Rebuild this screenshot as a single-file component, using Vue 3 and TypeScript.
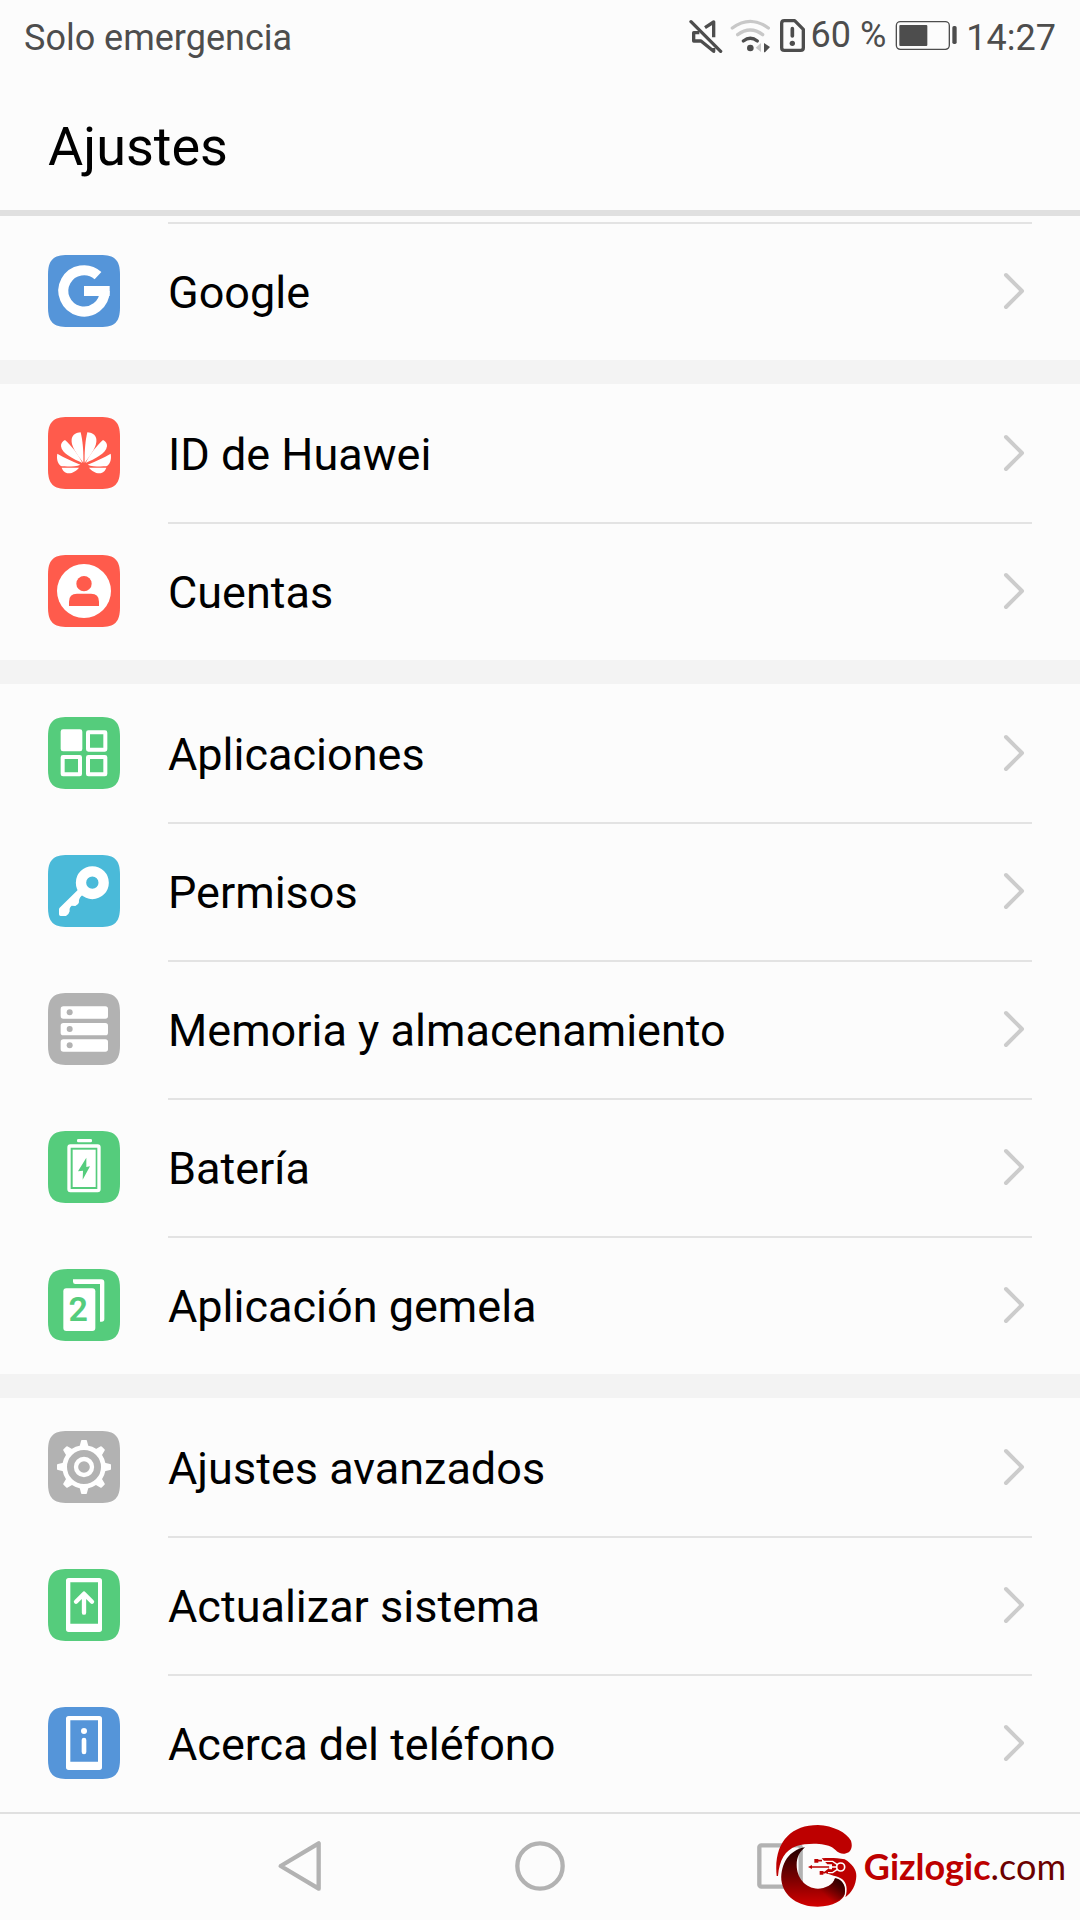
<script setup lang="ts">
type IconName =
  | 'google' | 'huawei' | 'account' | 'apps' | 'key' | 'storage'
  | 'battery' | 'twin' | 'gear' | 'update' | 'info'

interface SettingItem {
  label: string
  icon: IconName
  color: string
}

const blue = '#5595d9'
const red = '#ff5b4c'
const green = '#55cc7c'
const cyan = '#4abad9'
const grey = '#b2b2b2'

const groups: SettingItem[][] = [
  [{ label: 'Google', icon: 'google', color: blue }],
  [
    { label: 'ID de Huawei', icon: 'huawei', color: red },
    { label: 'Cuentas', icon: 'account', color: red },
  ],
  [
    { label: 'Aplicaciones', icon: 'apps', color: green },
    { label: 'Permisos', icon: 'key', color: cyan },
    { label: 'Memoria y almacenamiento', icon: 'storage', color: grey },
    { label: 'Batería', icon: 'battery', color: green },
    { label: 'Aplicación gemela', icon: 'twin', color: green },
  ],
  [
    { label: 'Ajustes avanzados', icon: 'gear', color: grey },
    { label: 'Actualizar sistema', icon: 'update', color: green },
    { label: 'Acerca del teléfono', icon: 'info', color: blue },
  ],
]

const teeth = [0, 45, 90, 135, 180, 225, 270, 315]
</script>

<template>
  <div class="screen">
    <div class="status">
      <span class="carrier">Solo emergencia</span>
      <div class="indicators">
        <svg class="mute" viewBox="57 54 102 108" width="34" height="36" fill="none" stroke="#4d4d4d" stroke-width="10">
          <path d="M88 98H71V123H93L131 154V144" stroke-linejoin="round" />
          <path d="M105 83L131 66V112" stroke-linejoin="round" />
          <path d="M63 65L152 154" stroke-linecap="round" />
        </svg>
        <svg class="wifi" viewBox="180 54 123 108" width="41" height="36" fill="none" stroke-width="10" stroke-linecap="round">
          <path d="M187 84Q241 44 295 84" stroke="#c8c8c8" />
          <path d="M203 104Q241 76 278 104" stroke="#c8c8c8" />
          <path d="M220 123Q241 106 262 123" stroke="#4d4d4d" />
          <circle cx="241" cy="144" r="10" fill="#4d4d4d" />
          <path d="M273 129V156L257 143Z" fill="#c8c8c8" />
          <path d="M282 129L300 141L285 157H282Z" fill="#4d4d4d" />
        </svg>
        <svg class="sim" viewBox="327 54 81 108" width="27" height="36" fill="none" stroke="#4d4d4d" stroke-width="10">
          <path d="M335 70Q335 62 343 62H374L400 88V143Q400 151 392 151H343Q335 151 335 143Z" stroke-linejoin="round" />
          <path d="M367 86V108" stroke-width="11" stroke-linecap="round" />
          <circle cx="367" cy="130" r="8" fill="#4d4d4d" stroke="none" />
        </svg>
        <span class="percent">60 %</span>
        <svg class="power" viewBox="675 54 189 108" width="63" height="36">
          <rect x="679" y="65" width="159" height="83" rx="12" fill="none" stroke="#4d4d4d" stroke-width="4" />
          <rect x="688" y="75" width="84" height="63" rx="3" fill="#4d4d4d" />
          <rect x="847" y="78" width="13" height="54" rx="5" fill="#4d4d4d" />
        </svg>
        <span class="clock">14:27</span>
      </div>
    </div>

    <header class="header">
      <h1>Ajustes</h1>
    </header>

    <main class="list">
      <section v-for="(group, g) in groups" :key="g" class="group">
        <a v-for="item in group" :key="item.label" href="#" class="row">
          <svg class="icon" viewBox="0 0 216 216" width="72" height="72" fill="#fff">
            <path
              d="M0 60C0 15 15 0 60 0H156C201 0 216 15 216 60V156C216 201 201 216 156 216H60C15 216 0 201 0 156Z"
              :fill="item.color"
            />
            <template v-if="item.icon === 'google'">
              <path d="M150 62A62 62 0 1 0 170 108" fill="none" stroke="#fff" stroke-width="30" />
              <rect x="108" y="93" width="77" height="30" />
            </template>
            <template v-else-if="item.icon === 'huawei'">
              <g v-for="side in [1, -1]" :key="side" :transform="side === 1 ? '' : 'translate(216 0) scale(-1 1)'">
                <path d="M106 137C86 112 68 87 71 66C74 52 85 47 98 46C104 70 107 105 106 137Z" />
                <path d="M103 138C76 126 42 110 39 88C38 79 44 72 51 69C68 84 91 112 103 138Z" />
                <path d="M97 143C74 133 48 122 28 110C24 128 32 145 41 148C60 149 84 149 97 143Z" />
                <path d="M41 152H93C87 160 74 169 62 169C50 168 44 160 41 152Z" />
              </g>
            </template>
            <template v-else-if="item.icon === 'account'">
              <circle cx="108" cy="108" r="81" />
              <circle cx="108" cy="86" r="23" :fill="item.color" />
              <path d="M63 153V140Q63 116 87 116H129Q153 116 153 140V153Z" :fill="item.color" />
            </template>
            <template v-else-if="item.icon === 'apps'">
              <rect x="38" y="37" width="65" height="66" rx="7" />
              <g fill="none" stroke="#fff" stroke-width="12">
                <rect x="120" y="46" width="52" height="52" rx="1" />
                <rect x="44" y="120" width="52" height="52" rx="1" />
                <rect x="120" y="120" width="52" height="52" rx="1" />
              </g>
            </template>
            <template v-else-if="item.icon === 'key'">
              <circle cx="133" cy="83" r="34" fill="none" stroke="#fff" stroke-width="31" />
              <path d="M90 104L35 158Q33 160 33 163V178Q33 183 38 183H54Q64 176 65 169C64 162 65 157 71 152L82 153Q92 149 93 142C92 136 94 129 100 123L108 116Z" />
            </template>
            <template v-else-if="item.icon === 'storage'">
              <g v-for="y in [40, 90, 139]" :key="y">
                <rect x="38" :y="y" width="142" height="37" rx="8" />
                <circle cx="65" :cy="y + 18" r="9" :fill="item.color" />
              </g>
            </template>
            <template v-else-if="item.icon === 'battery'">
              <rect x="87" y="24" width="45" height="10" rx="4" />
              <rect x="63" y="45" width="90" height="134" rx="4" fill="none" stroke="#fff" stroke-width="10" />
              <rect x="74" y="56" width="69" height="112" />
              <path d="M115 80L90 121L105 119L104 146L126 106L115 108Z" :fill="item.color" />
            </template>
            <template v-else-if="item.icon === 'twin'">
              <rect x="46" y="58" width="96" height="128" rx="9" />
              <path d="M75 31H160Q169 31 169 40V150Q169 158 161 158H156V45H82Q75 45 75 38Z" />
              <text x="91" y="156" text-anchor="middle" class="digit" :fill="item.color">2</text>
            </template>
            <template v-else-if="item.icon === 'gear'">
              <circle cx="108" cy="108" r="58" fill="none" stroke="#fff" stroke-width="14" />
              <circle cx="108" cy="108" r="24" fill="none" stroke="#fff" stroke-width="13" />
              <path
                v-for="angle in teeth"
                :key="angle"
                d="M99 30Q99 27 102 27H114Q117 27 117 30L121 46L129 50H87L95 46Z"
                :transform="`rotate(${angle} 108 108)`"
              />
            </template>
            <template v-else>
              <path d="M62 27H154Q162 27 162 35V181Q162 189 154 189H62Q54 189 54 181V35Q54 27 62 27ZM67 40V164H150V40Z" fill-rule="evenodd" />
              <path
                v-if="item.icon === 'update'"
                d="M108 76V131M84 98L108 74L132 98"
                fill="none" stroke="#fff" stroke-width="13" stroke-linecap="round" stroke-linejoin="round"
              />
              <g v-else>
                <circle cx="108" cy="72" r="9" />
                <rect x="101" y="92" width="14" height="50" rx="7" />
              </g>
            </template>
          </svg>
          <span class="label">{{ item.label }}</span>
          <svg class="chevron" viewBox="0 0 24 42" width="24" height="42">
            <path d="M4 5L20 21L4 37" fill="none" stroke="#ccc" stroke-width="4" stroke-linecap="round" stroke-linejoin="round" />
          </svg>
        </a>
      </section>
    </main>

    <nav class="nav">
      <button type="button" class="back" aria-label="Atrás">
        <svg viewBox="0 0 150 156" width="50" height="52" fill="none" stroke="#b2b2b2" stroke-width="13" stroke-linejoin="round">
          <path d="M17 78L131 10V146Z" />
        </svg>
      </button>
      <button type="button" class="home" aria-label="Inicio">
        <svg viewBox="0 0 156 156" width="52" height="52" fill="none" stroke="#b2b2b2" stroke-width="13">
          <circle cx="78" cy="78" r="68" />
        </svg>
      </button>
      <button type="button" class="recent" aria-label="Recientes">
        <svg viewBox="0 0 156 156" width="52" height="52" fill="none" stroke="#b2b2b2" stroke-width="13">
          <rect x="16" y="16" width="124" height="124" rx="6" />
        </svg>
      </button>
      <div class="brand">
        <svg viewBox="75 72 246 252" width="82" height="84">
          <defs>
            <linearGradient id="swirl" x1="0.500" y1="0" x2="0.500" y2="1">
              <stop offset="0.050" stop-color="#2a0000" />
              <stop offset="0.500" stop-color="#750000" />
              <stop offset="1" stop-color="#d40000" />
            </linearGradient>
            <linearGradient id="shade" x1="1" y1="0" x2="0" y2="1">
              <stop offset="0.100" stop-color="#2a0000" />
              <stop offset="0.700" stop-color="#2a0000" stop-opacity="0" />
            </linearGradient>
          </defs>
          <path d="M80 228C70 130 120 75 204 75C250 77 290 98 303 122C310 145 300 160 284 161C265 163 258 150 246 142C225 128 170 128 140 138C105 150 88 180 84 228Z" fill="#bd0000" />
          <path d="M165 142C118 150 92 190 94 240C100 290 145 320 203 320C250 320 280 300 284 283C290 258 274 236 255 235C250 255 225 266 204 266C165 265 140 232 140 195C140 170 150 155 165 142Z" fill="url(#swirl)" />
          <path d="M284 283C290 258 274 236 255 235C250 255 225 266 204 266L240 312Q276 300 284 283Z" fill="url(#shade)" />
          <path d="M215 175C240 173 262 174 284 178C305 190 320 210 319 228C318 255 306 277 286 292C294 268 290 248 276 237C262 228 240 225 226 219L238 208H246V193H232Z" fill="#bd0000" />
          <path d="M186 201H238M200 182H216M214 218H224L238 207" fill="none" stroke="#bd0000" stroke-width="5" />
          <path d="M174 201L186 195V207ZM193 177H205V188H193ZM209 213H220V224H209Z" fill="#bd0000" />
          <path d="M238 201H260M222 184H248L262 194M234 218H248L262 208" fill="none" stroke="#fff" stroke-width="4" />
          <circle cx="272" cy="201" r="12" fill="#bd0000" stroke="#fff" stroke-width="5" />
        </svg>
        <span class="wordmark"><b>Gizlogic</b><span class="tld">.com</span></span>
      </div>
    </nav>
  </div>
</template>

<style>
body {
  background: #fcfcfc;
}
</style>

<style scoped>
.screen {
  min-height: 100vh;
  display: flex;
  flex-direction: column;
  background: #fcfcfc;
  color: #000;
  font-family: Roboto, "Liberation Sans", sans-serif;
}

svg {
  display: block;
  flex: none;
}

.status {
  display: flex;
  align-items: center;
  justify-content: space-between;
  height: 72px;
  padding: 0 24px;
  color: #4d4d4d;
  font-size: 36px;
  line-height: 44px;
}

.carrier,
.clock {
  padding-top: 4px;
}

.indicators {
  display: flex;
  align-items: center;
}

.wifi {
  margin-left: 7px;
}

.sim {
  margin: 0 5px 0 8px;
}

.percent {
  padding-bottom: 2px;
}

.power {
  margin: 0 8px 0 9px;
}

.header {
  display: flex;
  align-items: center;
  height: 138px;
  padding: 0 48px;
  border-bottom: 6px solid #e0e0e0;
}

h1 {
  margin: 0;
  padding-top: 12px;
  font-size: 54px;
  line-height: 64px;
  font-weight: 400;
}

.list {
  flex: 1;
  padding-top: 6px;
}

.group + .group {
  border-top: 24px solid #f3f3f3;
}

.row {
  position: relative;
  display: flex;
  align-items: center;
  height: 138px;
  padding: 0 48px;
  color: inherit;
  text-decoration: none;
}

.row + .row::before,
.group:first-child .row::before {
  content: "";
  position: absolute;
  top: 0;
  left: 168px;
  right: 48px;
  height: 2px;
  background: #e3e3e3;
}

.label {
  flex: 1;
  margin-left: 48px;
  padding-top: 4px;
  font-size: 45px;
  line-height: 54px;
}

.chevron {
  margin-right: 6px;
}

.digit {
  font-size: 102px;
  font-weight: 600;
}

.nav {
  position: relative;
  display: grid;
  grid-template-columns: 3fr 4fr 4fr 4fr 3fr;
  height: 108px;
  box-shadow: inset 0 2px #e0e0e0;
}

.nav button {
  display: flex;
  align-items: center;
  justify-content: center;
  padding: 0;
  border: 0;
  background: none;
}

.back {
  grid-column: 2;
}

.brand {
  position: absolute;
  top: 12px;
  right: 14px;
  display: flex;
  align-items: center;
  gap: 7px;
}

.wordmark {
  color: #bd0000;
  font-family: Lato, sans-serif;
  font-size: 36px;
  line-height: 44px;
  white-space: nowrap;
}

.tld {
  color: #6b0000;
  font-weight: 400;
}
</style>
